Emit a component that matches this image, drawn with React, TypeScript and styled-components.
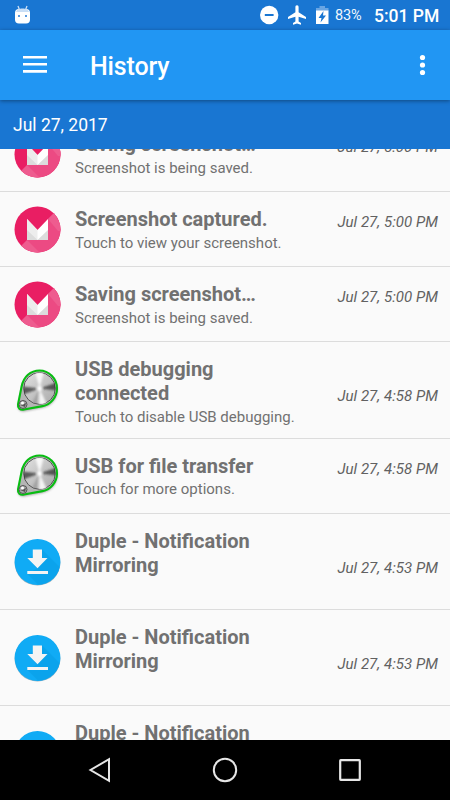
import React from "react";
import styled, { createGlobalStyle } from "styled-components";

const GlobalStyle = createGlobalStyle`
  html, body { margin: 0; padding: 0; background: #000; }
  * { box-sizing: border-box; }
  svg { display: block; flex: none; }
`;

const Screen = styled.div`
  width: 450px;
  height: 800px;
  display: flex;
  flex-direction: column;
  overflow: hidden;
  background: #fafafa;
  font-family: Roboto, "Liberation Sans", sans-serif;
`;

const StatusBar = styled.header`
  height: 30px;
  flex: none;
  display: flex;
  align-items: center;
  padding: 0 10px 0 14px;
  background: #1976d2;
  color: #fff;
`;

const StatusIcons = styled.div`
  display: flex;
  align-items: center;
  margin-left: auto;
`;

const Battery = styled.span`
  width: 28px;
  margin-left: 5px;
  padding-top: 2px;
  font-size: 14.5px;
  line-height: 30px;
  letter-spacing: -0.2px;
  color: #f1f7fd;
  white-space: nowrap;
`;

const Clock = styled.span`
  width: 66px;
  margin-left: 11px;
  font-size: 17.5px;
  font-weight: 500;
  line-height: 30px;
  padding-top: 1px;
  white-space: nowrap;
`;

const AppBar = styled.div`
  height: 70px;
  flex: none;
  display: flex;
  align-items: center;
  padding: 0 15px 0 20px;
  background: #2196f3;
  color: #fff;
  position: relative;
  z-index: 2;
  box-shadow: 0 1px 4px rgba(0, 0, 0, 0.4);
`;

const AppTitle = styled.h1`
  margin: 3px 0 0 40px;
  font-size: 25px;
  font-weight: 500;
  line-height: 30px;
  letter-spacing: -0.15px;
  flex: 1;
`;

const IconButton = styled.button`
  display: flex;
  padding: 0;
  border: 0;
  background: none;
  color: inherit;
`;

const DateHeader = styled.div`
  height: 48.5px;
  flex: none;
  padding: 1px 13px 0;
  font-size: 17.5px;
  line-height: 48px;
  background: #1976d2;
  color: #fff;
`;

const List = styled.ul`
  flex: 1;
  min-height: 0;
  margin: 0;
  padding: 0;
  list-style: none;
  display: flex;
  flex-direction: column;
  overflow: hidden;

  > li:first-child { margin-top: -31.1px; }
`;

const Row = styled.li<{ $tall?: boolean }>`
  height: ${(p) => (p.$tall ? 96.2 : 75)}px;
  flex: none;
  display: flex;
  border-bottom: 1px solid #dcdcdc;
  padding: 0 12px 0 14px;
`;

const Avatar = styled.div`
  width: 47px;
  display: flex;
  align-items: center;
`;

const Body = styled.div`
  flex: 1;
  margin-left: 14px;
  padding-top: 15px;
`;

const Heading = styled.div`
  display: flex;
  justify-content: space-between;
  align-items: flex-end;
`;

const Title = styled.h2`
  width: 200px;
  margin: 0;
  font-size: 20px;
  font-weight: 700;
  line-height: 24px;
  color: #717171;
`;

const Time = styled.time`
  margin-bottom: -3px;
  font-size: 15px;
  font-style: italic;
  line-height: 24px;
  letter-spacing: 0.05px;
  color: #616161;
  white-space: nowrap;
`;

const Detail = styled.p`
  margin: 2.7px 0 0;
  font-size: 15px;
  line-height: 18px;
  color: #717171;
`;

const NavBar = styled.nav`
  height: 60px;
  flex: none;
  display: flex;
  align-items: center;
  justify-content: center;
  gap: 100px;
  background: #000;
`;

const Marshmallow = () => (
  <svg width="47" height="48" viewBox="0 -1 47 48">
    <defs>
      <clipPath id="disc"><circle cx="23.5" cy="23.5" r="23" /></clipPath>
    </defs>
    <g clipPath="url(#disc)">
      <rect width="47" height="47" fill="#e91e63" />
      <path d="M47 0V47H0L7.500 40 40 7Z" fill="#ec4a83" />
      <path d="M40 7 50 25H44L34 13Z" fill="#ee5c8f" />
      <path d="M13 34 29 50H3L5 42Z" fill="#ee5c8f" />
    </g>
    <path d="M13 13 23.5 24 34 13V34H13Z" fill="#fff" />
    <path d="M13 13 23.5 24V34H13Z" fill="#ededed" />
    <path d="M13 24 23.5 34H13ZM34 24V34H23.5Z" fill="#dcdcdc" />
  </svg>
);

const Knob = () => (
  <svg width="47" height="49" viewBox="0 -2.5 47 49">
    <defs>
      <linearGradient id="metal" x1="0" y1="0" x2="1" y2="1">
        <stop offset="0" stopColor="#e2e2e2" />
        <stop offset=".5" stopColor="#c4c4c4" />
        <stop offset="1" stopColor="#aaa" />
      </linearGradient>
      <clipPath id="knobFace"><circle cx="25.500" cy="20" r="15.800" /></clipPath>
      <filter id="soft" x="-20%" y="-20%" width="140%" height="140%">
        <feGaussianBlur stdDeviation="1.3" />
      </filter>
    </defs>
    <path d="M8 22C8 -1 43.500 -2 43.500 21C43.500 32 36 38 28 39.500L10 43C6 43 3.500 41 4 37Z" fill="#555" opacity=".5" filter="url(#soft)" />
    <path d="M7.600 18C9.600 8 16.500 2 25.500 2C35 2 43 10 43 20C43 29 36.500 36 28.500 37.600L10 41C6 42 3.500 39.500 4 36Z" fill="#b5b5b5" stroke="#08bd12" strokeWidth="2.100" />
    <circle cx="25.500" cy="20" r="15.800" fill="url(#metal)" stroke="#555" strokeWidth="1" />
    <g clipPath="url(#knobFace)">
      <g filter="url(#soft)">
        <path d="M25.500 20 9 18 9 26ZM25.500 20 43 14 43 22Z" fill="#333" opacity=".75" />
        <path d="M25.500 20 16 38 22 38Z" fill="#777" opacity=".4" />
        <path d="M25.500 20 21 3 30 3ZM25.500 20 25 37 33 36Z" fill="#fff" opacity=".85" />
        <circle cx="25.500" cy="20" r="2.500" fill="#fff" />
      </g>
    </g>
    <circle cx="9" cy="36" r="4" fill="#aaa" stroke="#555" strokeWidth="1" />
    <path d="M6 36.500 9 36 12 34.500 11 38.500Z" fill="#555" />
    <circle cx="8.500" cy="34.500" r="1.500" fill="#fff" />
  </svg>
);

const Download = () => (
  <svg width="47" height="49" viewBox="0 -.5 47 49">
    <defs>
      <clipPath id="blueDisc"><circle cx="23.500" cy="24.500" r="22.800" /></clipPath>
    </defs>
    <circle cx="23.500" cy="25.200" r="22.900" fill="#9eb3bd" />
    <circle cx="23.500" cy="24.500" r="22.900" fill="#10abf5" />
    <path d="M28 12 47 31V49H26L13.500 36.500 23 31 14 21Z" fill="#0aa0e8" opacity=".7" clipPath="url(#blueDisc)" />
    <path d="M18.800 12H28V20.500H33.500L23.500 30.700 13.300 20.500H18.800ZM13.300 33.500H34V36.400H13.300Z" fill="#f4f4f4" />
  </svg>
);

type Kind = "capture" | "usb" | "download";

const ICONS: Record<Kind, React.FC> = {
  capture: Marshmallow,
  usb: Knob,
  download: Download,
};

const ITEMS: { kind: Kind; title: string; detail?: string; time: string; tall?: boolean }[] = [
  { kind: "capture", title: "Saving screenshot…", detail: "Screenshot is being saved.", time: "Jul 27, 5:00 PM" },
  { kind: "capture", title: "Screenshot captured.", detail: "Touch to view your screenshot.", time: "Jul 27, 5:00 PM" },
  { kind: "capture", title: "Saving screenshot…", detail: "Screenshot is being saved.", time: "Jul 27, 5:00 PM" },
  { kind: "usb", title: "USB debugging connected", detail: "Touch to disable USB debugging.", time: "Jul 27, 4:58 PM", tall: true },
  { kind: "usb", title: "USB for file transfer", detail: "Touch for more options.", time: "Jul 27, 4:58 PM" },
  { kind: "download", title: "Duple - Notification Mirroring", time: "Jul 27, 4:53 PM", tall: true },
  { kind: "download", title: "Duple - Notification Mirroring", time: "Jul 27, 4:53 PM", tall: true },
  { kind: "download", title: "Duple - Notification Mirroring", time: "Jul 27, 4:53 PM", tall: true },
];

export default function App() {
  return (
    <>
      <GlobalStyle />
      <Screen>
        <StatusBar>
          <svg width="17" height="20" viewBox="0 0 17 20">
            <path d="M4 1 5.500 5M13 1 11.500 5" stroke="#c9def5" strokeWidth="1.300" />
            <rect x="1" y="4" width="15" height="14.500" rx="4" fill="#fff" />
            <path d="M2 7C3 4 5 3.500 8.500 3.500S14 4 15 7Z" fill="#c9def5" />
            <path d="M4 10H6V12H4ZM11 10H13V12H11Z" fill="#5b9be0" />
          </svg>
          <StatusIcons>
            <svg width="71" height="22" viewBox="0 0 71 22">
              <circle cx="10.200" cy="11" r="9.200" fill="#fff" />
              <path d="M5.800 11H14.600" stroke="#1976d2" strokeWidth="2" />
              <path d="M38 1.200C39.200 1.200 39.600 2.100 39.600 3.200V8.300L47 13V15L39.600 12.700V17.400L42 19.100V20.700L38 19.600 34 20.700V19.100L36.400 17.400V12.700L29 15V13L36.400 8.300V3.200C36.400 2.100 36.800 1.200 38 1.200Z" fill="#fff" />
              <path d="M60.500 2H66V4H69.500V7H57V4H60.500Z" fill="#69a5e3" />
              <path d="M57 6.500H69.500V20H57Z" fill="#fff" />
              <path d="M64.500 7 59.500 14H62.500L61.500 18.500 67 11.500H64Z" fill="#1976d2" />
            </svg>
          </StatusIcons>
          <Battery>83%</Battery>
          <Clock>5:01 PM</Clock>
        </StatusBar>
        <AppBar>
          <IconButton aria-label="Menu">
            <svg width="30" height="20" viewBox="0 0 30 20">
              <path d="M3 2.200H27M3 9.300H27M3 16.400H27" stroke="#fff" strokeWidth="2.600" />
            </svg>
          </IconButton>
          <AppTitle>History</AppTitle>
          <IconButton aria-label="More options">
            <svg width="25" height="24" viewBox="0 0 25 24" fill="#fff">
              <circle cx="12.500" cy="4.500" r="2.600" />
              <circle cx="12.500" cy="12" r="2.600" />
              <circle cx="12.500" cy="19.500" r="2.600" />
            </svg>
          </IconButton>
        </AppBar>
        <DateHeader>Jul 27, 2017</DateHeader>
        <List>
          {ITEMS.map((item, i) => {
            const Icon = ICONS[item.kind];
            return (
              <Row key={i} $tall={item.tall}>
                <Avatar><Icon /></Avatar>
                <Body>
                  <Heading>
                    <Title>{item.title}</Title>
                    <Time>{item.time}</Time>
                  </Heading>
                  {item.detail && <Detail>{item.detail}</Detail>}
                </Body>
              </Row>
            );
          })}
        </List>
        <NavBar>
          <svg width="24" height="26" viewBox="0 0 24 26">
            <path d="M21 2.200V23.800L2.500 13Z" fill="none" stroke="#e6e6e6" strokeWidth="2" />
          </svg>
          <svg width="26" height="26" viewBox="0 0 26 26">
            <circle cx="13" cy="13" r="11.200" fill="none" stroke="#e6e6e6" strokeWidth="2" />
          </svg>
          <svg width="24" height="26" viewBox="0 0 24 26">
            <rect x="2.200" y="3.200" width="19.600" height="19.600" rx=".5" fill="none" stroke="#e6e6e6" strokeWidth="2.200" />
          </svg>
        </NavBar>
      </Screen>
    </>
  );
}
